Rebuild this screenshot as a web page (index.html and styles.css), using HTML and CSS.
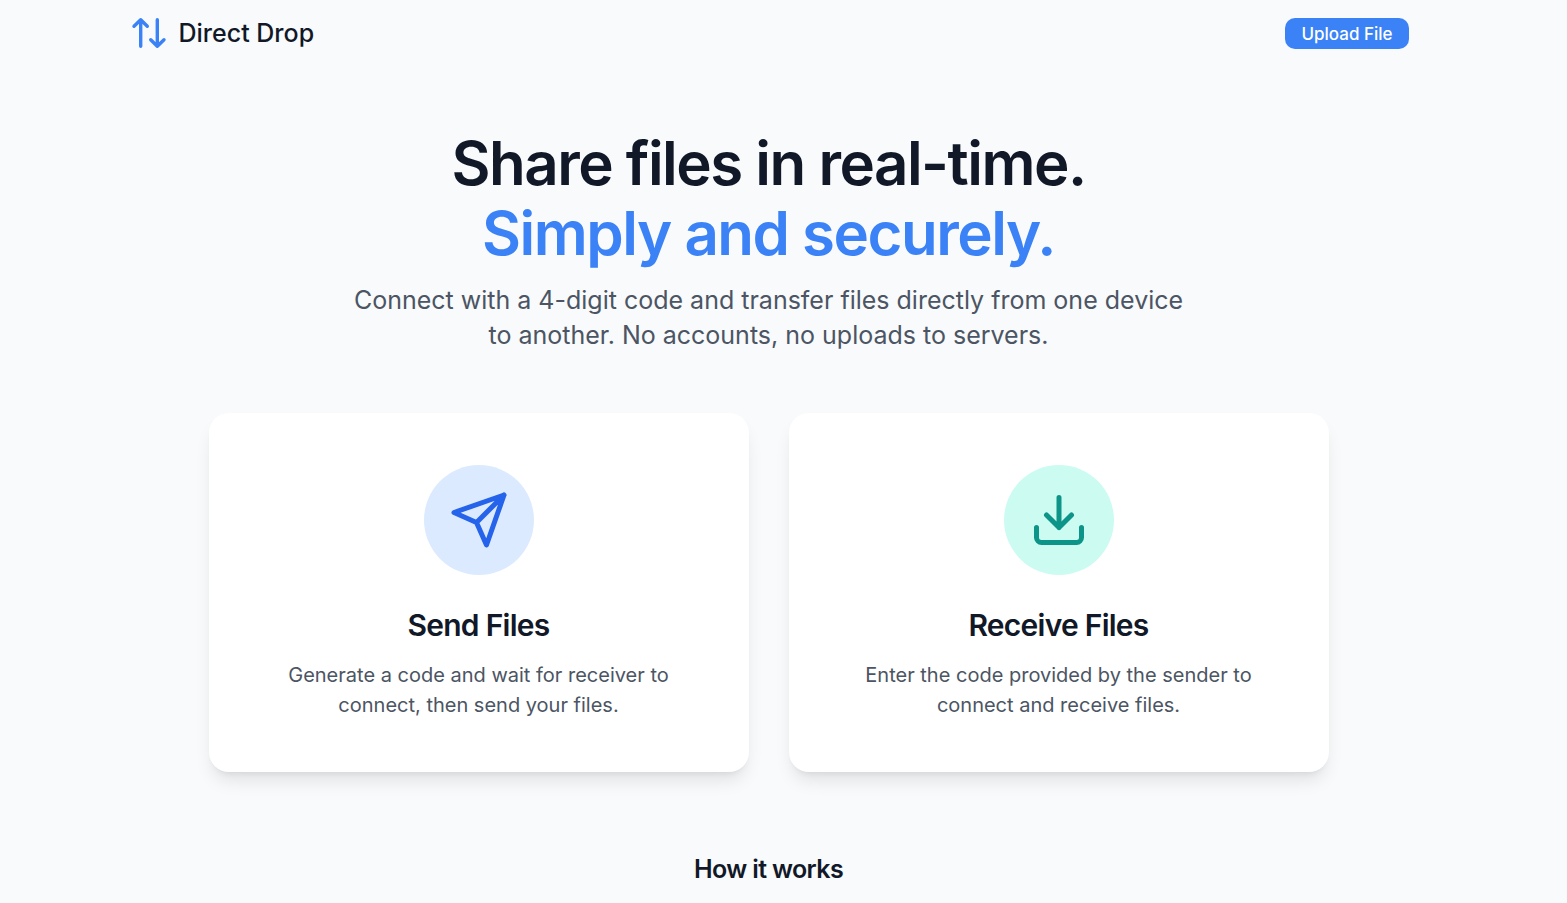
FILE: index.html
```html
<!DOCTYPE html>
<html lang="en">
<head>
<meta charset="utf-8">
<meta name="viewport" content="width=device-width, initial-scale=1">
<title>Direct Drop</title>
<link rel="stylesheet" href="styles.css">
</head>
<body>
<header class="site-header">
  <a class="brand" href="#">
    <svg class="brand-icon" viewBox="0 0 40 40" fill="none" stroke="currentColor" stroke-width="3.4" stroke-linecap="round" stroke-linejoin="round" aria-hidden="true">
      <path d="M11.7 33.3V6.7M5 13.3l6.7-6.6 6.6 6.6M28.3 6.7v26.6M21.7 26.7l6.6 6.6 6.7-6.6"/>
    </svg>
    <span>Direct Drop</span>
  </a>
  <button class="upload" type="button">Upload File</button>
</header>
<main class="page">
  <section class="hero">
    <h1 class="title">Share files in real-time.<br><span class="accent">Simply and securely.</span></h1>
    <p class="lead">Connect with a 4-digit code and transfer files directly from one device to another. No accounts, no uploads to servers.</p>
  </section>
  <section class="cards">
    <a class="card" href="#send">
      <span class="badge badge-send">
        <svg class="icon" viewBox="0 0 24 24" fill="none" stroke="currentColor" stroke-width="2" stroke-linecap="round" stroke-linejoin="round" aria-hidden="true"><path d="m22 2-7 20-4-9-9-4ZM22 2 11 13"/></svg>
      </span>
      <h2 class="card-title">Send Files</h2>
      <p class="card-text">Generate a code and wait for receiver to connect, then send your files.</p>
    </a>
    <a class="card" href="#receive">
      <span class="badge badge-receive">
        <svg class="icon" viewBox="0 0 24 24" fill="none" stroke="currentColor" stroke-width="2" stroke-linecap="round" stroke-linejoin="round" aria-hidden="true"><path d="M21 15v4a2 2 0 0 1-2 2H5a2 2 0 0 1-2-2v-4M7 10l5 5 5-5M12 15V3"/></svg>
      </span>
      <h2 class="card-title">Receive Files</h2>
      <p class="card-text">Enter the code provided by the sender to connect and receive files.</p>
    </a>
  </section>
  <section class="how">
    <h2 class="how-title">How it works</h2>
  </section>
</main>
</body>
</html>
```
FILE: styles.css
```css
* { box-sizing: border-box; }
body {
  margin: 0;
  padding-right: 30px;
  overflow-x: hidden;
  background: #f9fafc;
  color: #111827;
  font-family: Inter, "Liberation Sans", sans-serif;
}
h1, h2, p { margin: 0; }
h1, h2 {
  font-weight: 600;
  letter-spacing: -0.025em;
}
a { color: inherit; text-decoration: none; }
.site-header {
  display: flex;
  align-items: center;
  justify-content: space-between;
  max-width: 1280px;
  height: 66px;
  margin: 0 auto;
}
.brand {
  display: flex;
  align-items: center;
  gap: 10px;
  font-size: 25px;
  font-weight: 500;
}
.brand-icon { width: 40px; height: 40px; color: #3b82f6; }
.upload {
  padding: 6px 16px 5px;
  border: 0;
  border-radius: 10px;
  background: #3b82f6;
  color: #fff;
  font: 500 17px/20px Inter, "Liberation Sans", sans-serif;
}
.page {
  max-width: 1120px;
  margin: 0 auto;
  padding-top: 62px;
  text-align: center;
}
.title {
  font-size: 60px;
  line-height: 70px;
}
.accent { color: #3b82f6; }
.lead {
  max-width: 840px;
  margin: 15px auto 0;
  color: #4b5563;
  font-size: 25px;
  line-height: 35px;
}
.cards {
  display: grid;
  grid-template-columns: 1fr 1fr;
  gap: 40px;
  margin-top: 60px;
}
.card {
  display: flex;
  flex-direction: column;
  align-items: center;
  padding: 52px 60px;
  border-radius: 20px;
  background: #fff;
  box-shadow: 0 12px 18px -4px rgb(0 0 0 / 10%), 0 5px 7px -5px rgb(0 0 0 / 10%);
}
.badge {
  display: grid;
  place-items: center;
  width: 110px;
  height: 110px;
  border-radius: 50%;
}
.badge-send { background: #dbeafe; color: #2563eb; }
.badge-receive { background: #ccfbf1; color: #0d9488; }
.icon { width: 60px; height: 60px; }
.card-title {
  margin-top: 30px;
  font-size: 30px;
  line-height: 40px;
}
.card-text {
  margin-top: 15px;
  color: #4b5563;
  font-size: 20px;
  line-height: 30px;
}
.how { margin-top: 80px; }
.how-title {
  font-size: 25px;
  line-height: 35px;
}
```
